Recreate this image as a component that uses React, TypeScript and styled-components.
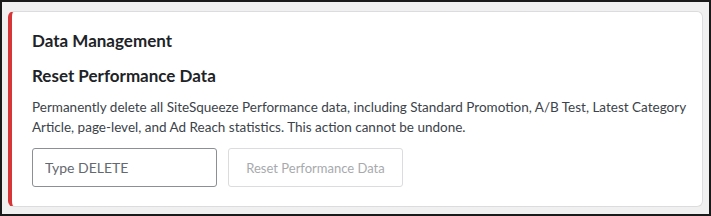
import React from "react";
import styled, { createGlobalStyle } from "styled-components";

const Global = createGlobalStyle`
  html, body { margin: 0; padding: 0; }
  body { background: #1e1e1e; font-family: "Lato", "Noto Sans", sans-serif; }
  * { box-sizing: border-box; }
`;

const Frame = styled.div`
  width: 711px;
  height: 216px;
  border: 2px solid #1a1a1a;
  background: #f0f0f1;
  padding: 9px 6px 6px 6px;
`;

const Card = styled.section`
  height: 196px;
  background: #fff;
  border: 1px solid #dcdcde;
  border-left: 4px solid #d63638;
  border-radius: 6px;
  padding: 14px 12px 0 20px;
  display: flex;
  flex-direction: column;
`;

const Title = styled.h2`
  margin: 0;
  font-size: 17px;
  font-weight: 700;
  line-height: 30px;
  color: #1d2327;
`;

const SubTitle = styled.h3`
  margin: 5px 0 0 0;
  font-size: 17px;
  font-weight: 700;
  line-height: 30px;
  color: #1d2327;
`;

const Desc = styled.p`
  margin: 6px 0 0 0;
  font-size: 13.5px;
  line-height: 20px;
  color: #3c434a;
`;

const Row = styled.div`
  display: flex;
  gap: 11px;
  margin-top: 11px;
`;

const Input = styled.input`
  width: 185px;
  height: 39px;
  border: 1px solid #8c8f94;
  border-radius: 3px;
  padding: 0 12px;
  font-family: inherit;
  font-size: 14px;
  color: #2c3338;
  background: #fff;
  &::placeholder { color: #646970; }
`;

const Button = styled.button<{ disabled?: boolean }>`
  width: 175px;
  height: 39px;
  border: 1px solid #dcdcde;
  border-radius: 3px;
  background: #fff;
  color: #a7aaad;
  font-family: inherit;
  font-size: 13px;
  padding: 0;
  cursor: ${(p) => (p.disabled ? "default" : "pointer")};
`;

export default function App() {
  return (
    <>
      <Global />
      <Frame>
        <Card>
          <Title>Data Management</Title>
          <SubTitle>Reset Performance Data</SubTitle>
          <Desc>
            Permanently delete all SiteSqueeze Performance data, including Standard Promotion, A/B Test, Latest Category
            Article, page-level, and Ad Reach statistics. This action cannot be undone.
          </Desc>
          <Row>
            <Input placeholder="Type DELETE" />
            <Button disabled>Reset Performance Data</Button>
          </Row>
        </Card>
      </Frame>
    </>
  );
}
